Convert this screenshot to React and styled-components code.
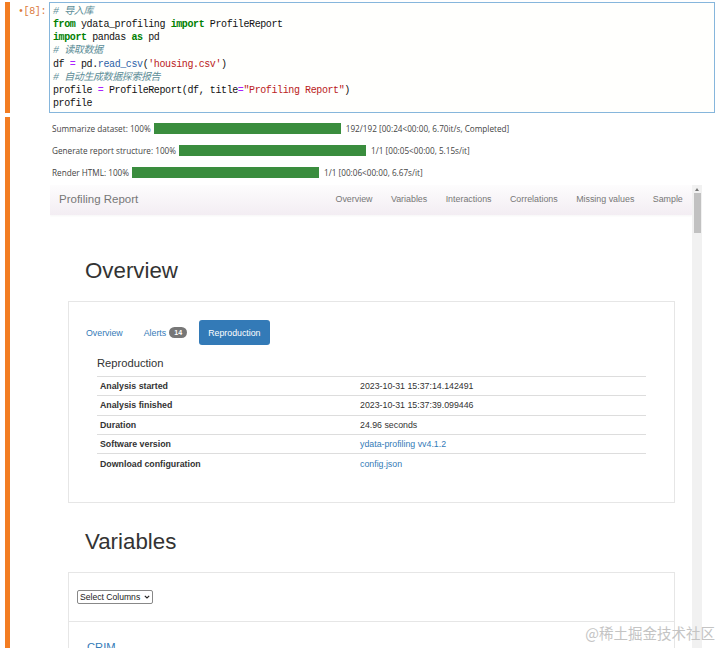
import React from "react";
import styled, { createGlobalStyle } from "styled-components";

const GlobalStyle = createGlobalStyle`
  html, body {
    margin: 0;
    padding: 0;
    background: #fff;
  }
  body {
    font-family: "Liberation Sans", Arial, sans-serif;
  }
`;

const Page = styled.div`
  height: 100vh;
  display: flex;
  flex-direction: column;
  overflow: hidden;
  position: relative;
`;

const Cell = styled.div`
  display: flex;
  align-items: stretch;
  margin-top: ${(p) => p.$top || 0}px;
  flex: ${(p) => (p.$grow ? 1 : "none")};
  min-height: 0;
`;

const Marker = styled.div`
  width: 5px;
  margin-left: 5px;
  background: #f37d22;
  flex: none;
`;

const Prompt = styled.div`
  width: 36px;
  padding-right: 3px;
  text-align: right;
  font-family: "Liberation Mono", monospace;
  font-size: 10px;
  letter-spacing: -0.4px;
  color: #db7a3c;
  padding-top: 4px;
  flex: none;
`;

const CodeBox = styled.div`
  flex: 1;
  margin-right: 5px;
  height: 107px;
  border: 1px solid #86b6dc;
  background: #fffffd;
  padding: 2px 3px 0;
  font-family: "Liberation Mono", "Noto Sans CJK SC", monospace;
  font-size: 10px;
  letter-spacing: -0.4px;
  line-height: 13.15px;
  color: #111;
  white-space: pre;
`;

const Line = styled.div``;
const Kw = styled.span`
  color: #008000;
  font-weight: bold;
`;
const Cm = styled.span`
  color: #5d8e98;
  font-style: italic;
`;
const Op = styled.span`
  color: #aa22ff;
`;
const Str = styled.span`
  color: #ba2121;
`;
const Prop = styled.span`
  color: #2d62a8;
`;

const Output = styled.div`
  flex: 1;
  margin-left: 40px;
  margin-right: 18px;
  display: flex;
  flex-direction: column;
  min-height: 0;
`;

const ProgressRow = styled.div`
  height: 22px;
  display: flex;
  align-items: center;
  padding-left: 2px;
  font-family: "Open Sans", sans-serif;
  font-size: 8.2px;
  color: #444;
  white-space: nowrap;
`;

const Bar = styled.div`
  width: 187px;
  height: 11px;
  background: #3a8d3e;
  margin: 0 5px 0 3px;
`;

const Frame = styled.div`
  flex: 1;
  margin-top: 2px;
  display: flex;
  min-height: 0;
  overflow: hidden;
`;

const Report = styled.div`
  flex: 1;
  min-width: 0;
  font-family: "Liberation Sans", Arial, sans-serif;
  font-size: 8.8px;
  color: #333;
`;

const Navbar = styled.div`
  height: 30px;
  display: flex;
  align-items: center;
  justify-content: space-between;
  background: linear-gradient(#fdfcfd, #f3edf3);
  box-shadow: 0 1px 2px rgba(0, 0, 0, 0.04);
`;

const Brand = styled.div`
  font-size: 11.5px;
  color: #777;
  padding-left: 9px;
  margin-top: -2px;
`;

const NavLinks = styled.div`
  display: flex;
  margin-top: -2px;
`;

const NavLink = styled.div`
  padding: 0 9.2px;
  color: #777;
  font-size: 8.9px;
`;

const Container = styled.div`
  padding: 0 17px 0 18px;
`;

const H1 = styled.div`
  font-size: 22.3px;
  line-height: 24px;
  color: #333;
  padding-left: 17px;
  margin: ${(p) => p.$m};
`;

const Card = styled.div`
  border: 1px solid #e6e6e6;
  background: #fff;
`;

const Tabs = styled.div`
  display: flex;
  align-items: center;
  gap: 3px;
  padding: 18px 8px 0;
`;

const Tab = styled.div`
  height: 25px;
  display: flex;
  align-items: center;
  gap: 3px;
  padding: 0 9px;
  border-radius: 3px;
  font-size: 8.8px;
  color: ${(p) => (p.$active ? "#fff" : "#337ab7")};
  background: ${(p) => (p.$active ? "#337ab7" : "transparent")};
`;

const Badge = styled.span`
  display: inline-flex;
  align-items: center;
  justify-content: center;
  min-width: 18px;
  height: 11px;
  border-radius: 6px;
  background: #777;
  color: #fff;
  font-weight: bold;
  font-size: 7px;
`;

const Section = styled.div`
  padding: 12px 28px 29px;
`;

const H4 = styled.div`
  font-size: 11.2px;
  line-height: 12px;
  color: #333;
  margin-bottom: 7px;
`;

const Table = styled.div`
  border-top: 1px solid #ddd;
`;

const Row = styled.div`
  display: grid;
  grid-template-columns: 260px 1fr;
  height: 19.3px;
  align-items: center;
  border-bottom: 1px solid #ddd;
  box-sizing: border-box;
  &:last-child {
    border-bottom: none;
  }
`;

const Label = styled.div`
  font-weight: bold;
  padding-left: 3px;
  color: #333;
`;

const Value = styled.div`
  padding-left: 3px;
  color: ${(p) => (p.$link ? "#337ab7" : "#333")};
`;

const CardHead = styled.div`
  padding: 17px 8px 17px;
  border-bottom: 1px solid #e6e6e6;
`;

const SelectWrap = styled.div`
  position: relative;
  display: inline-flex;
`;

const Select = styled.select`
  appearance: none;
  -webkit-appearance: none;
  font-family: "Liberation Sans", Arial, sans-serif;
  font-size: 8.6px;
  height: 14px;
  width: 76px;
  padding: 0 0 0 2px;
  border: 1px solid #888;
  border-radius: 2px;
  background: #fff;
  color: #222;
  outline: none;
`;

const Chevron = styled.svg`
  position: absolute;
  right: 3px;
  top: 5px;
  pointer-events: none;
`;

const CardBody = styled.div`
  padding: 19px 18px 0;
`;

const VarName = styled.div`
  font-size: 11.2px;
  color: #337ab7;
`;

const Scrollbar = styled.div`
  width: 10px;
  background: #f1f1f1;
  display: flex;
  flex-direction: column;
  align-items: center;
  flex: none;
`;

const Arrow = styled.div`
  width: 0;
  height: 0;
  border-left: 2.5px solid transparent;
  border-right: 2.5px solid transparent;
  border-bottom: 3px solid #777;
  margin-top: 3px;
`;

const Thumb = styled.div`
  width: 7px;
  height: 40px;
  margin-top: 2px;
  background: #c1c1c1;
`;

const Watermark = styled.div`
  position: absolute;
  right: 5px;
  bottom: 5px;
  font-family: "Noto Sans CJK SC", sans-serif;
  font-size: 14.5px;
  color: #c4c4c4;
`;

const progress = [
  ["Summarize dataset: 100%", "192/192 [00:24<00:00, 6.70it/s, Completed]"],
  ["Generate report structure: 100%", "1/1 [00:05<00:00, 5.15s/it]"],
  ["Render HTML: 100%", "1/1 [00:06<00:00, 6.67s/it]"],
];

const navItems = ["Overview", "Variables", "Interactions", "Correlations", "Missing values", "Sample"];

const rows = [
  ["Analysis started", "2023-10-31 15:37:14.142491"],
  ["Analysis finished", "2023-10-31 15:37:39.099446"],
  ["Duration", "24.96 seconds"],
  ["Software version", "ydata-profiling vv4.1.2", true],
  ["Download configuration", "config.json", true],
];

function App() {
  return (
    <Page>
      <GlobalStyle />
      <Cell $top={2}>
        <Marker />
        <Prompt>•[8]:</Prompt>
        <CodeBox>
          <Line><Cm># 导入库</Cm></Line>
          <Line><Kw>from</Kw> ydata_profiling <Kw>import</Kw> ProfileReport</Line>
          <Line><Kw>import</Kw> pandas <Kw>as</Kw> pd</Line>
          <Line><Cm># 读取数据</Cm></Line>
          <Line>df <Op>=</Op> pd.<Prop>read_csv</Prop>(<Str>'housing.csv'</Str>)</Line>
          <Line><Cm># 自动生成数据探索报告</Cm></Line>
          <Line>profile <Op>=</Op> ProfileReport(df, title<Op>=</Op><Str>"Profiling Report"</Str>)</Line>
          <Line>profile</Line>
        </CodeBox>
      </Cell>
      <Cell $top={4} $grow>
        <Marker />
        <Output>
          {progress.map(([label, info]) => (
            <ProgressRow key={label}>
              {label}
              <Bar />
              {info}
            </ProgressRow>
          ))}
          <Frame>
            <Report>
              <Navbar>
                <Brand>Profiling Report</Brand>
                <NavLinks>
                  {navItems.map((n) => (
                    <NavLink key={n}>{n}</NavLink>
                  ))}
                </NavLinks>
              </Navbar>
              <Container>
                <H1 $m="44px 0 18px">Overview</H1>
                <Card>
                  <Tabs>
                    <Tab>Overview</Tab>
                    <Tab>
                      Alerts <Badge>14</Badge>
                    </Tab>
                    <Tab $active>Reproduction</Tab>
                  </Tabs>
                  <Section>
                    <H4>Reproduction</H4>
                    <Table>
                      {rows.map(([k, v, link]) => (
                        <Row key={k}>
                          <Label>{k}</Label>
                          <Value $link={link}>{v}</Value>
                        </Row>
                      ))}
                    </Table>
                  </Section>
                </Card>
                <H1 $m="27px 0 18px">Variables</H1>
                <Card>
                  <CardHead>
                    <SelectWrap>
                      <Select defaultValue="">
                        <option value="">Select Columns</option>
                      </Select>
                      <Chevron width="6" height="4" viewBox="0 0 6 4">
                        <path d="M0.8 0.8 L3 3 L5.2 0.8" fill="none" stroke="#222" strokeWidth="1.1" />
                      </Chevron>
                    </SelectWrap>
                  </CardHead>
                  <CardBody>
                    <VarName>CRIM</VarName>
                  </CardBody>
                </Card>
              </Container>
            </Report>
            <Scrollbar>
              <Arrow />
              <Thumb />
            </Scrollbar>
          </Frame>
        </Output>
      </Cell>
      <Watermark>@稀土掘金技术社区</Watermark>
    </Page>
  );
}

export default App;
